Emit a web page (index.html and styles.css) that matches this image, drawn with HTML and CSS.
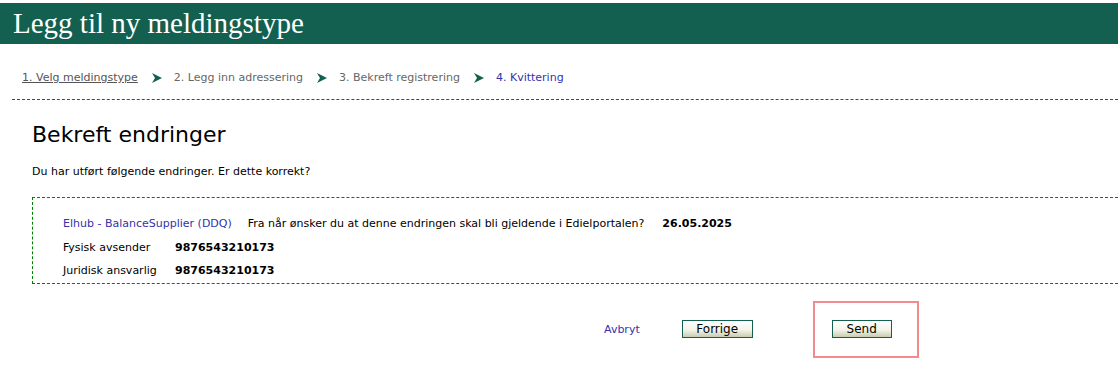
FILE: index.html
```html
<!DOCTYPE html>
<html lang="nb">
<head>
    <meta charset="UTF-8">
    <meta name="viewport" content="width=device-width, initial-scale=1.0">
    <title>Legg til ny meldingstype</title>
    <link rel="stylesheet" href="styles.css">
</head>
<body>
    <header class="top-bar">
        <h1>Legg til ny meldingstype</h1>
    </header>
    <nav class="steps">
        <a href="#" class="step done">1. Velg meldingstype</a>
        <svg class="arrow" viewBox="0 0 10 10"><polygon points="0,0 10,5 0,10 3,5" /></svg>
        <span class="step">2. Legg inn adressering</span>
        <svg class="arrow" viewBox="0 0 10 10"><polygon points="0,0 10,5 0,10 3,5" /></svg>
        <span class="step">3. Bekreft registrering</span>
        <svg class="arrow" viewBox="0 0 10 10"><polygon points="0,0 10,5 0,10 3,5" /></svg>
        <span class="step current">4. Kvittering</span>
    </nav>
    <main class="content">
        <h2>Bekreft endringer</h2>
        <p class="intro">Du har utført følgende endringer. Er dette korrekt?</p>
        <div class="changes">
            <div class="row">
                <a href="#" class="type">Elhub - BalanceSupplier (DDQ)</a>
                <span class="question">Fra når ønsker du at denne endringen skal bli gjeldende i Edielportalen?</span>
                <strong>26.05.2025</strong>
            </div>
            <div class="row">
                <span class="label">Fysisk avsender</span>
                <strong>9876543210173</strong>
            </div>
            <div class="row">
                <span class="label">Juridisk ansvarlig</span>
                <strong>9876543210173</strong>
            </div>
        </div>
        <div class="actions">
            <a href="#" class="cancel">Avbryt</a>
            <button class="btn prev">Forrige</button>
            <div class="highlight">
                <button class="btn send">Send</button>
            </div>
        </div>
    </main>
</body>
</html>
```

FILE: styles.css
```css
body {
    font-family: "DejaVu Sans", Verdana, sans-serif;
    font-size: 11px;
    margin: 0;
    padding: 0;
    background-color: #fff;
    color: #000;
}
.top-bar {
    margin-top: 3px;
    height: 41px;
    background-color: #135f50;
    color: #fff;
    display: flex;
    align-items: center;
    padding-left: 13px;
}
.top-bar h1 {
    margin: 0;
    font-family: "Liberation Serif", Georgia, serif;
    font-weight: normal;
    font-size: 29px;
}
.steps {
    display: flex;
    align-items: flex-start;
    margin-left: 12px;
    padding: 27px 0 0 10px;
    height: 28px;
    border-bottom: 1px dashed #135f50;
}
.step {
    color: #666;
    text-decoration: none;
}
.step.done {
    color: #555;
    text-decoration: underline;
}
.step.current {
    color: #3333aa;
}
.arrow {
    width: 10px;
    height: 10px;
    fill: #135f50;
    margin: 2px 12px 0 14px;
}
.content {
    padding: 22px 0 0 32px;
}
.content h2 {
    margin: 0;
    font-weight: normal;
    font-size: 22px;
}
.intro {
    margin: 18px 0 0 0;
}
.changes {
    margin-top: 19px;
    border: 1px dashed #008000;
    border-right: none;
    padding: 14px 0 0 30px;
}
.row {
    display: flex;
    align-items: center;
    height: 23.5px;
}
.type {
    color: #3333aa;
    text-decoration: none;
    margin-right: 16px;
}
.question {
    margin-right: 18px;
}
.label {
    width: 112px;
}
.actions {
    display: flex;
    align-items: center;
    margin-top: 17px;
    padding-left: 572px;
}
.cancel {
    color: #3333aa;
    text-decoration: none;
    margin-right: 42px;
}
.btn {
    font-family: "DejaVu Sans", Verdana, sans-serif;
    font-size: 12px;
    color: #000;
    height: 18px;
    padding: 0;
    border: 1px solid #135f50;
    background: linear-gradient(#ffffff, #f4f4ea 55%, #c9cdb0);
}
.prev {
    width: 71px;
}
.send {
    width: 60px;
}
.highlight {
    margin-left: 60px;
    box-sizing: border-box;
    width: 106px;
    height: 57px;
    border: 2px solid #f28b8b;
    display: flex;
    align-items: center;
    padding-left: 17px;
}
```
